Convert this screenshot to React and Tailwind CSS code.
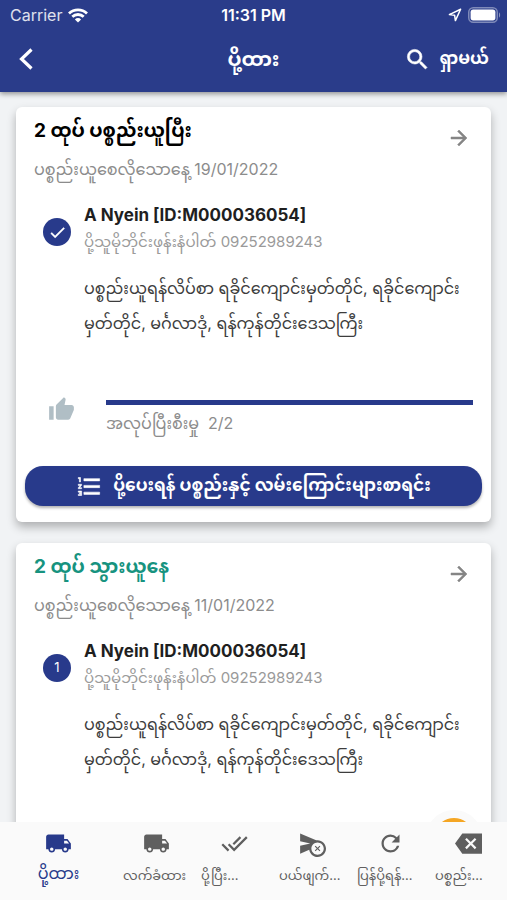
import {
  MdArrowForward,
  MdCancelScheduleSend,
  MdCheck,
  MdDoneAll,
  MdFormatListNumbered,
  MdLocalShipping,
  MdRefresh,
  MdSearch,
  MdThumbUp,
} from 'react-icons/md';

// slightly heavier strokes on the thin material glyphs
const HEAVY = '[&>path:last-child]:[stroke-width:0.5]';

const pickups = [
  {
    title: '2 ထုပ် ပစ္စည်းယူပြီး',
    date: '19/01/2022',
    done: true,
    sender: 'A Nyein [ID:M000036054]',
    phone: '09252989243',
    address: 'ပစ္စည်းယူရန်လိပ်စာ ရခိုင်ကျောင်းမှတ်တိုင်, ရခိုင်ကျောင်းမှတ်တိုင်, မင်္ဂလာဒုံ, ရန်ကုန်တိုင်းဒေသကြီး',
    picked: 2,
    total: 2,
  },
  {
    title: '2 ထုပ် သွားယူနေ',
    date: '11/01/2022',
    done: false,
    sender: 'A Nyein [ID:M000036054]',
    phone: '09252989243',
    address: 'ပစ္စည်းယူရန်လိပ်စာ ရခိုင်ကျောင်းမှတ်တိုင်, ရခိုင်ကျောင်းမှတ်တိုင်, မင်္ဂလာဒုံ, ရန်ကုန်တိုင်းဒေသကြီး',
    picked: 0,
    total: 2,
  },
];

function BackspaceSharp({ size }) {
  return (
    <svg viewBox="0 0 24 24" width={size} height={size} fill="currentColor">
      <path d="M24 3H6.5L0 12l6.5 9H24V3zm-5 12.59L17.59 17 14 13.41 10.41 17 9 15.59 12.59 12 9 8.41 10.41 7 14 10.59 17.59 7 19 8.41 15.41 12 19 15.59z" />
    </svg>
  );
}

const tabs = [
  { label: 'ပို့ထား', Icon: MdLocalShipping },
  { label: 'လက်ခံထား', Icon: MdLocalShipping },
  { label: 'ပို့ပြီး...', Icon: MdDoneAll },
  { label: 'ပယ်ဖျက်...', Icon: MdCancelScheduleSend },
  { label: 'ပြန်ပို့ရန်...', Icon: MdRefresh },
  { label: 'ပစ္စည်း...', Icon: BackspaceSharp },
];

function StatusBar() {
  return (
    <div className="grid grid-cols-3 items-center h-[30px] px-2.5 text-base leading-[30px]">
      <div className="flex items-center gap-1.5 text-white/85">
        <span>Carrier</span>
        <svg viewBox="0 0 20 15" className="w-5 h-[15px] text-white" fill="none" stroke="currentColor" strokeWidth="2.8">
          <path d="M1 5.4a13 13 0 0 1 18 0" />
          <path d="M4.3 8.8a8.2 8.2 0 0 1 11.4 0" />
          <path d="M10 14.6 6.9 11.4a4.4 4.4 0 0 1 6.2 0z" fill="currentColor" stroke="none" />
        </svg>
      </div>
      <span className="text-center font-semibold whitespace-nowrap">11:31 PM</span>
      <div className="flex items-center justify-end gap-1.5">
        <svg viewBox="0 0 14 14" className="w-3.5 h-3.5" fill="none" stroke="currentColor" strokeWidth="1.5" strokeLinejoin="round">
          <path d="M12.6 1.2 1.4 6.6l5.2.6.8 5.4z" />
        </svg>
        <svg viewBox="0 0 33 16" className="w-[33px] h-4 -mr-1">
          <rect x="0.75" y="0.75" width="28.5" height="14.5" rx="4.5" fill="none" stroke="white" strokeOpacity="0.4" strokeWidth="1.5" />
          <rect x="2.6" y="2.6" width="24.8" height="10.8" rx="2.6" fill="white" />
          <path d="M31 5.5c1.5.6 1.5 4.4 0 5z" fill="white" fillOpacity="0.45" />
        </svg>
      </div>
    </div>
  );
}

function PickupFooter({ item }) {
  return (
    <>
      <div className="mt-[59px] flex pl-8 pr-[18px]">
        <MdThumbUp size={27} className="mr-[31px] -mt-1 shrink-0 text-[#b0bec5]" />
        <div className="flex-1">
          <div
            className="h-[5px] bg-[#c9cfe6]"
            role="progressbar"
            aria-label="အလုပ်ပြီးစီးမှု"
            aria-valuenow={item.picked}
            aria-valuemin={0}
            aria-valuemax={item.total}
          >
            <div className="h-full bg-[#283a8b]" style={{ width: `${(item.picked / item.total) * 100}%` }} />
          </div>
          <p className="text-base leading-9 text-[#8c8c8c]">
            အလုပ်ပြီးစီးမှု&nbsp; {item.picked}/{item.total}
          </p>
        </div>
      </div>

      <div className="mt-[25px] px-[9px]">
        <button
          type="button"
          className="flex h-10 w-full items-center justify-center gap-2.5 rounded-[18px] bg-[#283a8b] text-[17px] font-bold whitespace-nowrap text-white shadow-[0_2px_3px_rgba(0,0,0,0.3)]"
        >
          <MdFormatListNumbered size={27} className={HEAVY} />
          ပို့ပေးရန် ပစ္စည်းနှင့် လမ်းကြောင်းများစာရင်း
        </button>
      </div>
    </>
  );
}

function PickupCard({ item, index }) {
  return (
    <article
      className={`shrink-0 rounded-md bg-white pt-1 shadow-[0_5px_10px_rgba(0,0,0,0.28)] ${item.done ? 'pb-4' : 'pb-20'}`}
    >
      <div className="flex items-start justify-between pl-[18px] pr-5">
        <div>
          <h2 className={`text-[19px] leading-10 font-bold ${item.done ? 'text-black' : 'text-[#17937f]'}`}>
            {item.title}
          </h2>
          <p className="text-base leading-9 text-[#8c8c8c]">ပစ္စည်းယူစေလိုသောနေ့ {item.date}</p>
        </div>
        <button type="button" aria-label="အသေးစိတ်" className="mt-[15px] text-[#858585]">
          <MdArrowForward size={24} className={HEAVY} />
        </button>
      </div>

      <div className="mt-3.5 grid grid-cols-[28px_1fr] gap-x-[13px] pl-[27px] pr-5">
        <span className="mt-[17px] flex h-7 w-7 items-center justify-center rounded-full bg-[#283a8b] text-[13px] text-white">
          {item.done ? <MdCheck size={19} className={HEAVY} /> : index}
        </span>
        <div>
          <h3 className="text-[17px] leading-7 font-bold text-[#1f1f1f]">{item.sender}</h3>
          <p className="text-[15px] leading-[26px] text-[#9a9a9a]">ပို့သူမိုဘိုင်းဖုန်းနံပါတ် {item.phone}</p>
          <p className="mt-4 text-base leading-[35px] text-[#3d3d3d]">{item.address}</p>
        </div>
      </div>

      {item.done && <PickupFooter item={item} />}
    </article>
  );
}

export default function App() {
  return (
    <div className="flex h-screen flex-col overflow-hidden bg-[#f1f3f5] font-[Inter,'Noto_Sans_Myanmar','Noto_Sans',sans-serif]">
      <header className="relative z-10 shrink-0 bg-[#2a3c8a] text-white shadow-[0_2px_5px_rgba(0,0,0,0.4)]">
        <StatusBar />
        <div className="grid h-[62px] grid-cols-3 items-center px-[18px] pb-1">
          <button type="button" aria-label="နောက်သို့" className="justify-self-start">
            <svg viewBox="0 0 16 24" className="h-6 w-4" fill="none" stroke="currentColor" strokeWidth="3.2">
              <path d="M13.5 2.5 3.5 12l10 9.5" />
            </svg>
          </button>
          <h1 className="text-center text-xl leading-10 font-bold">ပို့ထား</h1>
          <button type="button" className="flex items-center gap-2 justify-self-end text-[17px] font-bold whitespace-nowrap">
            <MdSearch size={27} className={HEAVY} />
            ရှာမယ်
          </button>
        </div>
      </header>

      <main className="relative flex min-h-0 flex-1 flex-col gap-[21px] overflow-hidden px-4 pt-[15px]">
        {pickups.map((item, i) => (
          <PickupCard key={item.date} item={item} index={i} />
        ))}
        {/* floating add button, mostly tucked under the tab bar */}
        <button
          type="button"
          aria-label="အသစ်"
          className="absolute right-[25px] -bottom-11 h-14 w-14 rounded-full border-8 border-[#fafafa] bg-[#f5a623]"
        />
      </main>

      <nav className="relative z-10 grid h-[78px] shrink-0 grid-cols-[3fr_2fr_2fr_2fr_2fr_2fr] bg-[#fafafa]">
        {tabs.map(({ label, Icon }, i) => (
          <button
            key={label}
            type="button"
            aria-current={i === 0 ? 'page' : undefined}
            className={`flex min-w-0 flex-col items-center px-1.5 pt-2 ${i === 0 ? 'text-[#283a8b]' : 'text-[#5f5f5f]'}`}
          >
            <Icon size={27} />
            <span className={i === 0 ? 'text-base leading-8' : 'w-full text-left text-[13px] leading-9 whitespace-nowrap'}>
              {label}
            </span>
          </button>
        ))}
      </nav>
    </div>
  );
}
